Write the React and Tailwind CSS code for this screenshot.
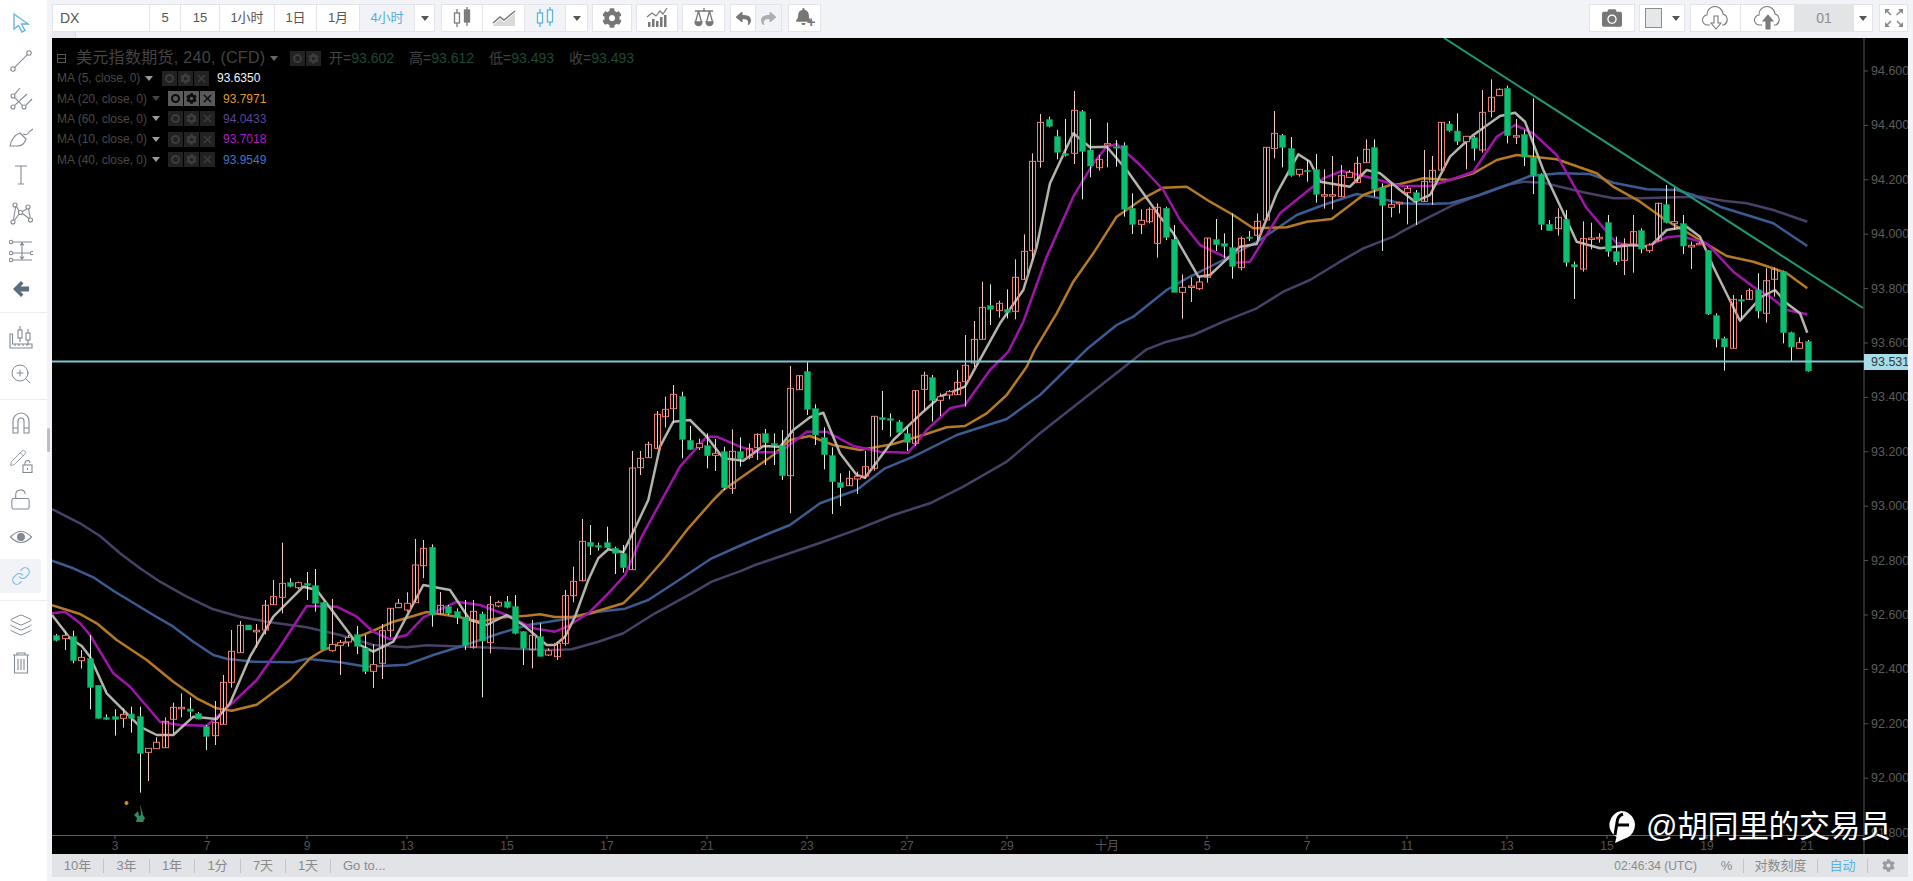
import { Link, Layers, LockOpen, Pencil, X, ZoomIn } from "lucide-react";
import { FaBell, FaCamera, FaCog, FaReply, FaShare } from "react-icons/fa";

// candle readings: [green, high, bodyTop, bodyBottom, low], y in 3x crop coords
const candleGroups = [
  [500, [
    [1,402,407,421,424],[0,392,406,416,450],[1,392,410,482,490],[0,450,472,482,506],[1,405,476,562,628],[1,556,556,655,656],
    [1,643,653,658,660],[1,628,650,658,707],[0,625,643,655,683],[1,620,642,655,698],[1,620,650,760,878],[0,745,745,757,843],
    [0,712,727,746,746],[0,652,664,743,743],[0,608,622,658,700],[0,580,622,626,652],[1,592,627,634,652],[1,636,641,657,658],
    [1,675,680,709,750],[0,603,668,707,735],[0,525,547,673,673],[0,390,454,547,563],[0,363,376,458,458],[1,375,375,390,390],
    [0,372,391,395,443],[0,300,316,390,403],[0,240,290,314,314],[0,128,250,292,340],[1,235,248,259,262],[0,245,248,263,268],
    [1,216,250,256,300],[1,207,257,310,335],[1,305,308,449,450],[0,297,433,452,455],[0,420,428,436,525],[0,405,412,426,440],
    [1,378,404,439,462],[1,405,445,514,522],[0,432,494,514,564],[0,372,392,490,537],[0,325,325,391,412],[0,297,310,323,323],
    [0,277,310,330,335],[0,117,195,308,308],[0,120,145,197,234],[1,133,142,345,380],[0,276,316,342,344],[1,315,320,340,345],
    [1,325,335,352,372],[1,300,353,436,450],[0,300,334,442,446],[1,335,342,423,592],[0,288,314,428,460],[0,302,307,318,322],
    [1,288,305,322,325],[1,285,320,400,403],[1,393,395,445,495],[0,360,406,449,505],[1,370,410,469,470],[0,445,452,465,468],
    [0,425,430,470,480],
    [0,270,287,430,437],[0,200,244,287,307],[0,57,124,242,244],[1,75,127,139,165],[1,128,137,139,152],[1,80,128,143,146],
    [1,140,145,160,222],[1,135,160,203,218],[0,-147,-96,209,209],
  ]],
  [340, [
    [0,333,355,383,405],[0,305,313,353,353],[0,213,223,325,328],[0,170,208,230,262],[0,135,163,206,250],[1,155,170,298,355],
    [1,258,301,328,330],[0,296,311,323,330],[1,280,317,347,385],[0,297,340,346,393],[1,320,335,443,450],[0,268,334,445,462],
    [1,292,335,356,380],[0,310,326,352,358],[0,280,283,323,360],[1,267,281,308,375],[1,280,311,314,375],[1,270,318,407,420],
    [0,78,145,407,520],[0,105,107,149,150],[1,65,95,208,225],[1,193,206,285,315],[1,262,293,344,388],[1,322,347,425,522],
    [1,400,428,443,498],[0,392,415,437,437],[0,395,409,417,462],[0,333,380,408,415],[0,229,229,385,392],[1,153,233,239,270],
    [1,220,236,241,290],[1,240,246,277,280],[1,260,281,307,333],[0,152,152,310,318],[0,95,106,148,210],[1,105,113,181,245],
    [0,160,170,181,228],[0,150,155,165,178],[0,90,127,164,165],[0,-15,76,125,200],
  ]],
  [90, [
    [0,693,748,819,831],[0,575,652,748,748],[1,583,647,658,705],[0,632,640,662,683],[1,598,658,667,685],[0,508,562,664,688],
    [0,433,484,568,570],[0,190,214,482,510],[0,72,97,214,233],[1,80,89,109,112],[1,120,140,187,208],[1,87,191,196,200],
    [0,3,61,190,222],[1,60,65,184,328],[1,87,180,228,262],[0,195,208,233,242],[0,98,161,165,232],[1,150,170,172,230],
    [1,157,167,358,380],[1,310,355,403,432],[0,358,391,403,432],[0,352,358,395,400],[0,340,352,460,503],[1,350,355,442,450],
    [1,405,449,607,607],[0,553,592,607,686],[0,562,588,592,636],[0,560,576,596,600],[0,444,444,562,578],[1,387,449,464,483],
    [1,430,461,469,505],[1,370,473,529,566],[0,440,445,533,541],[1,423,441,443,453],[0,370,394,436,450],[0,172,172,390,392],
    [0,63,130,175,205],[1,132,136,172,232],[1,141,176,256,260],[0,238,238,253,260],[1,210,241,243,275],[1,192,239,313,338],
    [0,238,314,316,356],[0,198,314,316,358],[0,225,257,320,320],[0,240,247,262,263],[0,200,220,278,278],[0,148,178,218,218],
    [1,148,173,298,320],[1,280,293,346,483],[0,280,343,352,382],[0,335,337,341,370],
  ]],
  [40, [
    [0,438,445,458,553],[1,450,458,482,555],[0,330,424,484,486],[0,348,391,426,495],[0,247,247,390,392],[1,243,252,272,275],
    [1,220,273,304,315],[0,289,289,305,388],[1,288,293,325,362],[0,150,217,330,338],[0,118,172,214,232],[0,145,148,167,168],
    [1,137,145,287,310],[0,237,287,290,312],[1,270,284,351,378],[1,175,352,407,462],[1,400,404,553,570],[1,540,553,572,572],
    [0,505,532,566,587],[1,510,538,667,680],[1,665,674,681,777],[0,544,596,687,695],[0,548,594,596,628],[0,580,592,595,608],
    [1,525,548,634,650],[1,590,635,665,675],[0,595,613,661,705],[0,525,575,612,698],[1,565,572,627,640],[0,610,615,632,638],
    [0,488,490,602,605],[1,435,494,547,550],[0,440,545,551,570],[1,525,551,618,642],[0,605,616,621,687],[0,605,610,613,615],
    [1,630,632,822,825],[1,820,827,897,922],[1,890,896,921,992],[0,765,778,925,925],[1,765,779,781,838],[0,745,752,778,780],
    [1,700,750,813,835],[0,685,722,820,848],[0,682,688,718,770],[1,692,695,878,910],[1,875,878,921,965],[0,892,908,925,925],
    [1,900,905,993,995],
  ]],
];

const candles = candleGroups.flatMap(([y0, rows]) =>
  rows.map(([g, h, t, b, l]) => ({ g, h: y0 + h / 3, t: y0 + t / 3, b: y0 + b / 3, l: y0 + l / 3 }))
);

const crop = (x0, y0, pts) => pts.map(([x, y]) => `${(x0 + x / 3).toFixed(1)},${(y0 + y / 3).toFixed(1)}`).join(" ");

// moving averages traced from the crops, same crop coords
const maDark = [
  crop(40,500,[[36,27],[120,70],[180,108],[240,160],[300,205],[360,245],[440,290],[520,328],[600,350],[680,365],[800,382],[900,405],[1000,435],[1100,442],[1160,436],[1300,441],[1440,447]]),
  crop(555,500,[[0,450],[50,448],[130,425],[205,400],[300,340],[410,280],[470,245],[560,212],[600,195],[660,175]]),
  crop(560,340,[[790,605],[900,565],[1000,525],[1110,490],[1210,440],[1340,365],[1440,280]]),
  crop(960,90,[[560,778],[620,755],[700,735],[790,695],[890,655],[970,605],[1050,570],[1140,515],[1210,475],[1300,440]]),
  crop(1400,40,[[0,578],[80,535],[160,495],[250,460],[320,435],[370,425],[430,428],[480,440],[550,457],[640,475],[720,475],[830,472],[900,470],[970,482],[1040,490],[1120,510],[1222,545]]),
].join(" ");
const maBlue = [
  crop(40,500,[[36,182],[100,205],[160,232],[220,272],[340,345],[400,380],[460,425],[520,465],[560,476],[640,485],[760,487],[800,476],[900,487],[980,500],[1100,494],[1180,465],[1260,440],[1380,400],[1460,376]]),
  crop(555,500,[[0,362],[50,354],[130,335],[210,326],[280,300],[380,235],[470,175],[560,135],[660,93]]),
  crop(560,340,[[690,555],[780,490],[890,450],[975,385],[1060,350],[1190,285],[1340,237],[1440,165]]),
  crop(960,90,[[380,778],[470,705],[520,680],[620,600],[680,565],[790,510],[900,450],[1010,375],[1090,345],[1190,312],[1260,325]]),
  crop(1400,40,[[0,490],[80,492],[150,490],[240,465],[330,432],[390,408],[480,400],[570,402],[640,428],[740,448],[830,450],[880,465],[960,500],[1040,525],[1120,550],[1222,618]]),
].join(" ");
const maOrange = [
  crop(40,500,[[36,316],[120,342],[170,370],[230,420],[320,480],[400,545],[470,595],[530,625],[575,632],[650,614],[750,540],[810,475],[850,450],[920,425],[1000,392],[1060,365],[1120,348],[1160,336],[1260,352],[1320,365],[1390,352],[1460,347],[1500,343]]),
  crop(555,500,[[0,351],[50,351],[110,338],[205,310],[260,255],[330,175],[400,85],[475,0]]),
  crop(560,340,[[490,450],[640,345],[690,300],[750,288],[820,315],[900,330],[1000,312],[1090,285],[1160,262],[1215,258],[1280,220],[1340,165],[1400,80]]),
  crop(960,90,[[225,778],[290,670],[340,575],[400,490],[470,380],[550,325],[610,293],[680,290],[750,335],[820,375],[880,415],[980,412],[1040,395],[1115,387],[1210,315],[1290,285]]),
  crop(1400,40,[[0,432],[70,415],[150,420],[220,400],[290,360],[350,345],[470,358],[590,400],[640,440],[720,485],[800,542],[900,600],[980,648],[1060,665],[1110,682],[1160,700],[1222,745]]),
].join(" ");
const maPurple = [
  crop(40,500,[[36,340],[75,335],[120,370],[150,405],[220,520],[270,560],[360,665],[420,675],[500,677],[560,625],[650,540],[720,440],[800,318],[890,320],[950,350],[1000,395],[1050,418],[1100,405],[1150,352],[1250,305],[1320,315],[1400,345],[1480,385]]),
  crop(555,500,[[0,395],[40,378],[100,340],[160,280],[210,225],[260,110],[320,0]]),
  crop(560,340,[[360,380],[440,290],[470,290],[540,320],[600,337],[660,337],[740,275],[800,275],[880,318],[960,335],[1045,338],[1100,270],[1170,205],[1215,195],[1290,90],[1345,35]]),
  crop(960,90,[[190,695],[260,500],[340,320],[400,220],[440,170],[470,162],[540,225],[610,300],[660,390],[720,465],[830,518],[870,515],[960,370],[1090,265],[1145,243],[1220,260]]),
  crop(1400,40,[[0,437],[90,438],[150,420],[220,395],[290,290],[345,255],[400,280],[470,345],[560,505],[650,610],[740,620],[800,592],[840,588],[920,610],[1000,695],[1060,740],[1110,770],[1160,810],[1222,823]]),
].join(" ");
const maGray = [
  crop(40,500,[[36,345],[90,415],[125,438],[150,470],[200,580],[300,680],[350,705],[400,705],[460,650],[530,657],[570,610],[630,470],[700,350],[790,260],[830,270],[950,430],[1000,455],[1060,425],[1150,255],[1230,270],[1290,360],[1340,375],[1400,345],[1450,375],[1520,435]]),
  crop(555,500,[[0,435],[30,410],[60,350],[100,240],[130,175],[160,148],[205,157],[240,85],[280,0]]),
  crop(560,340,[[300,320],[340,245],[390,240],[440,290],[490,355],[550,362],[610,318],[660,320],[700,270],[750,232],[790,218],[840,340],[890,405],[915,413],[1000,300],[1090,215],[1140,170],[1215,140]]),
  crop(960,90,[[120,700],[190,600],[230,470],[270,280],[340,130],[390,172],[440,170],[500,240],[600,380],[640,430],[715,560],[750,555],[840,470],[890,462],[950,310],[1015,193],[1050,215],[1080,275],[1170,290],[1220,240],[1260,250]]),
  crop(1400,40,[[0,450],[45,485],[90,465],[150,350],[220,285],[300,228],[345,218],[375,245],[430,390],[500,540],[530,605],[600,625],[700,615],[750,620],[800,570],[860,560],[900,590],[940,680],[1020,842],[1085,770],[1125,750],[1160,790],[1200,820],[1222,878]]),
].join(" ");

const priceLabels = ["94.600","94.400","94.200","94.000","93.800","93.600","93.400","93.200","93.000","92.800","92.600","92.400","92.200","92.000","91.800"];
const timeLabels = ["3","7","9","13","15","17","21","23","27","29","十月","5","7","11","13","15","19","21"];
const timeX = (i) => (i === 0 ? 115 : 107 + i * 100);

const maRows = [
  { name: "MA (5, close, 0)", value: "93.6350", color: "text-[#f4f4f4]", nameW: "w-[105px]", on: false },
  { name: "MA (20, close, 0)", value: "93.7971", color: "text-[#e09a2c]", nameW: "w-[111px]", on: true },
  { name: "MA (60, close, 0)", value: "94.0433", color: "text-[#5d4596]", nameW: "w-[111px]", on: false },
  { name: "MA (10, close, 0)", value: "93.7018", color: "text-[#b01cc4]", nameW: "w-[111px]", on: false },
  { name: "MA (40, close, 0)", value: "93.9549", color: "text-[#3f74c4]", nameW: "w-[111px]", on: false },
];

const Caret = ({ className = "border-t-[#555]" }) => (
  <span className={`inline-block w-0 h-0 border-l-[4px] border-r-[4px] border-t-[5px] border-l-transparent border-r-transparent ${className}`}></span>
);

const Cell = ({ w, className = "", children }) => (
  <div className={`${w} h-[28px] flex items-center justify-center border border-[#e3e5ea] -ml-px first:ml-0 ${className}`}>
    {children}
  </div>
);

const CandleIcon = ({ color = "#7b7b7b" }) => (
  <svg width="26" height="24" viewBox="0 0 26 24" fill="none" stroke={color} strokeWidth="1.3">
    <path d="M8 3v18M18 1v19" />
    <rect x="5.5" y="7" width="5" height="10" fill="#fff" />
    <rect x="15.5" y="4" width="5" height="12" fill={color === "#7b7b7b" ? color : "#fff"} />
  </svg>
);

const AreaIcon = () => (
  <svg width="26" height="20" viewBox="0 0 26 20">
    <path d="M2 17L9 11L13 14L24 5V18H2Z" fill="#d9d9d9" />
    <path d="M2 15L9 9L13 12L24 3" fill="none" stroke="#777" strokeWidth="1.4" />
  </svg>
);

const IndicatorIcon = () => (
  <svg width="22" height="22" viewBox="0 0 22 22" fill="#777">
    <rect x="2" y="15" width="2.5" height="5" />
    <rect x="6" y="12" width="2.5" height="8" />
    <rect x="10" y="14" width="2.5" height="6" />
    <rect x="14" y="10" width="2.5" height="10" />
    <rect x="18" y="8" width="2.5" height="12" />
    <path d="M1 10L6 6L10 9L14 4L17 7L21 1" fill="none" stroke="#777" strokeWidth="1.2" />
  </svg>
);

const ScaleIcon = () => (
  <svg width="22" height="22" viewBox="0 0 22 22" fill="none" stroke="#777" strokeWidth="1.3">
    <path d="M2 4H20M11 1V5M5.5 4L2.5 15M5.5 4L8.5 15M16.5 4L13.5 15M16.5 4L19.5 15" />
    <path d="M2 15a3.5 3.5 0 0 0 7 0ZM13 15a3.5 3.5 0 0 0 7 0Z" fill="#777" />
  </svg>
);

const CloudDownIcon = () => (
  <svg width="30" height="24" viewBox="0 0 30 24" fill="none" stroke="#7b7b7b" strokeWidth="1.1">
    <path d="M9 19H7a5 5 0 0 1-1-10 8 8 0 0 1 16-1 6 6 0 0 1 1 11h-2" />
    <path d="M13 10h4v7h3l-5 6-5-6h3z" fill="#fff" />
  </svg>
);

const CloudUpIcon = () => (
  <svg width="30" height="24" viewBox="0 0 30 24" fill="none" stroke="#7b7b7b" strokeWidth="1.1">
    <path d="M9 19H7a5 5 0 0 1-1-10 8 8 0 0 1 16-1 6 6 0 0 1 1 11h-2" />
    <path d="M13 23v-8h-3l5-6 5 6h-3v8z" fill="#7b7b7b" />
  </svg>
);

const ExpandIcon = () => (
  <svg width="20" height="20" viewBox="0 0 20 20" fill="none" stroke="#8a8a8a" strokeWidth="1.6">
    <path d="M2 2L7 7M12.5 7L18 2M2 18L7 13M13 13L18 18" />
    <path d="M1 1h5L1 6ZM19 1h-5l5 5ZM1 19h5l-5-5ZM19 19h-5l5-5Z" fill="#8a8a8a" stroke="none" />
  </svg>
);

// left tool column drawings, all on a 24 box
const toolStroke = { width: 24, height: 24, viewBox: "0 0 24 24", fill: "none", stroke: "#838a94", strokeWidth: 1.1 };

const CursorTool = () => (
  <svg {...toolStroke} stroke="#62b7e6" strokeWidth="1.4">
    <path d="M5 3V18L9.5 14.5L13 21L16 19.5L12.5 13H19Z" />
  </svg>
);
const LineTool = () => (
  <svg {...toolStroke}>
    <circle cx="4" cy="20" r="2.2" />
    <circle cx="20" cy="4" r="2.2" />
    <path d="M5.6 18.4L18.4 5.6" />
  </svg>
);
const ForkTool = () => (
  <svg {...toolStroke}>
    <circle cx="4" cy="9" r="2" />
    <circle cx="4" cy="20" r="2" />
    <circle cx="15" cy="20" r="2" />
    <path d="M5.4 7.6L11 1M5.4 18.6L18 7M16.5 18.6L23 12M5.4 10.4L13.6 18.6" />
  </svg>
);
const BrushTool = () => (
  <svg {...toolStroke}>
    <path d="M1 21Q3 11 11 8L17 14Q15 21 8 21Z" />
    <path d="M14 9Q18 11 20 7L24 4" />
  </svg>
);
const TextTool = () => (
  <svg {...toolStroke}>
    <path d="M6 3H18M12 3V21M9 21H15" />
  </svg>
);
const NetTool = () => (
  <svg {...toolStroke}>
    <circle cx="6" cy="4" r="2" />
    <circle cx="19" cy="6" r="2" />
    <circle cx="4" cy="21" r="2" />
    <circle cx="21.5" cy="19" r="2" />
    <circle cx="11.5" cy="11.5" r="2" />
    <path d="M6.6 6L4.4 19M18 8L13 10.5M10 10L7.5 5.5M10 13L5.4 19.5M13.5 12.5L20 17.5M19.6 8L21.2 17" />
  </svg>
);
const FibTool = () => (
  <svg {...toolStroke}>
    <circle cx="2" cy="3" r="1.7" />
    <circle cx="2" cy="14" r="1.7" />
    <circle cx="2" cy="21" r="1.7" />
    <circle cx="23" cy="14" r="1.7" />
    <path d="M4 3H23M4 14H21M4 21H23M13 4V20M11 6.5L13 4L15 6.5M11 17.5L13 20L15 17.5" />
  </svg>
);
const BackTool = () => (
  <svg width="18" height="18" viewBox="0 0 18 18" fill="#5e6d7e">
    <path d="M9 1L1 9L9 17L11.5 14.5L8.5 11.5H17V6.5H8.5L11.5 3.5Z" />
  </svg>
);
const RulerTool = () => (
  <svg {...toolStroke}>
    <path d="M1 9H3.5V19H23V23H1ZM6 19V21M10 19V21M14 19V21M18 19V21" />
    <path d="M11 1V17M19 4V20" />
    <rect x="9" y="5" width="4" height="8" fill="#fff" />
    <rect x="17" y="8" width="4" height="7" fill="#fff" />
  </svg>
);
const MagnetTool = () => (
  <svg {...toolStroke}>
    <path d="M4 22V10a8 8 0 0 1 16 0V22H15V10a3 3 0 0 0-6 0V22ZM4 17H9M15 17H20" />
  </svg>
);
const PenLockTool = () => (
  <span className="relative block w-[24px] h-[24px]">
    <Pencil size={18} strokeWidth={1.1} color="#838a94" />
    <svg width="11" height="13" viewBox="0 0 11 13" fill="none" stroke="#838a94" strokeWidth="1.1" className="absolute right-0 bottom-0 bg-white">
      <rect x="1" y="5" width="9" height="7.5" />
      <path d="M3 5V3a2.5 2.5 0 0 1 5 0M5.5 8v2" />
    </svg>
  </span>
);
const EyeTool = () => (
  <svg {...toolStroke}>
    <path d="M1.5 12Q12 1 22.5 12Q12 23 1.5 12Z" />
    <circle cx="12" cy="12" r="3.4" fill="#838a94" />
  </svg>
);
const TrashTool = () => (
  <svg {...toolStroke}>
    <path d="M4 4H20M8 4V2H16V4M5.5 4V22H18.5V4M9 8V19M12 8V19M15 8V19" />
  </svg>
);

const ToolRow = ({ children, h = "h-[38px]", className = "" }) => (
  <div className={`${h} flex items-center justify-center w-[41px] ${className}`}>{children}</div>
);

const Sep = ({ className }) => <div className={`h-px bg-[#eaecef] ${className}`}></div>;

const Sidebar = () => (
  <aside className="w-[47px] shrink-0 bg-white pt-[4px]">
    <ToolRow><CursorTool /></ToolRow>
    <ToolRow><LineTool /></ToolRow>
    <ToolRow><ForkTool /></ToolRow>
    <ToolRow><BrushTool /></ToolRow>
    <ToolRow><TextTool /></ToolRow>
    <ToolRow><NetTool /></ToolRow>
    <ToolRow><FibTool /></ToolRow>
    <ToolRow><BackTool /></ToolRow>
    <Sep className="mt-[4px] mb-[5px]" />
    <ToolRow h="h-[37px]"><RulerTool /></ToolRow>
    <ToolRow h="h-[37px]"><ZoomIn size={24} strokeWidth={1} color="#838a94" /></ToolRow>
    <Sep className="mt-[7px] mb-[4px]" />
    <ToolRow><MagnetTool /></ToolRow>
    <ToolRow><PenLockTool /></ToolRow>
    <ToolRow><LockOpen size={23} strokeWidth={1.1} color="#838a94" /></ToolRow>
    <ToolRow><EyeTool /></ToolRow>
    <ToolRow h="h-[34px]" className="mt-[3px] bg-[#f1f3f6] rounded-r-[3px]"><Link size={20} strokeWidth={1.3} color="#6cb9e3" /></ToolRow>
    <Sep className="mt-[7px] mb-[5px]" />
    <ToolRow><Layers size={24} strokeWidth={1} color="#838a94" /></ToolRow>
    <ToolRow><TrashTool /></ToolRow>
  </aside>
);

const Toolbar = () => (
  <div className="h-[38px] shrink-0 pt-[4px] flex items-start text-[13px] text-[#555] bg-[#f1f3f6]">
    <div className="flex bg-white">
      <Cell w="w-[98px]" className="justify-start pl-[7px] text-[14px]">DX</Cell>
      <Cell w="w-[32px]">5</Cell>
      <Cell w="w-[40px]">15</Cell>
      <Cell w="w-[56px]">1小时</Cell>
      <Cell w="w-[43px]">1日</Cell>
      <Cell w="w-[44px]">1月</Cell>
      <Cell w="w-[56px]" className="bg-[#f1f3f6] text-[#52aee0]">4小时</Cell>
      <Cell w="w-[21px]"><Caret /></Cell>
    </div>
    <div className="flex bg-white ml-[6px]">
      <Cell w="w-[42px]"><CandleIcon /></Cell>
      <Cell w="w-[43px]"><AreaIcon /></Cell>
      <Cell w="w-[42px]" className="bg-[#f1f3f6]"><CandleIcon color="#59b5e6" /></Cell>
      <Cell w="w-[23px]"><Caret /></Cell>
    </div>
    <div className="flex bg-white ml-[4px]"><Cell w="w-[40px]"><FaCog size={20} color="#777" /></Cell></div>
    <div className="flex bg-white ml-[4px]"><Cell w="w-[42px]"><IndicatorIcon /></Cell></div>
    <div className="flex bg-white ml-[4px]"><Cell w="w-[43px]"><ScaleIcon /></Cell></div>
    <div className="flex bg-white ml-[5px]">
      <Cell w="w-[26px]"><FaReply size={15} color="#777" /></Cell>
      <Cell w="w-[27px]" className="bg-[#f1f3f6]"><FaShare size={15} color="#aeaeae" /></Cell>
    </div>
    <div className="flex bg-white ml-[6px]">
      <Cell w="w-[33px]">
        <span className="relative block w-[20px] h-[20px]">
          <FaBell size={17} color="#777" />
          <span className="absolute -right-[1px] bottom-0 text-[15px] leading-[13px] font-bold text-[#777]">+</span>
        </span>
      </Cell>
    </div>
    <div className="ml-auto flex">
      <div className="flex bg-white"><Cell w="w-[46px]"><FaCamera size={20} color="#777" /></Cell></div>
      <div className="flex bg-white ml-[4px]">
        <Cell w="w-[46px]" className="gap-[10px]">
          <span className="w-[17px] h-[20px] bg-[#e6e7e8] border border-[#8c8c8c]"></span>
          <Caret />
        </Cell>
      </div>
      <div className="flex bg-white ml-[5px]">
        <Cell w="w-[51px]"><CloudDownIcon /></Cell>
        <Cell w="w-[55px]"><CloudUpIcon /></Cell>
        <Cell w="w-[60px]" className="bg-[#e3e4e6] text-[#8f8f8f] text-[14px]">01</Cell>
        <Cell w="w-[20px]"><Caret /></Cell>
      </div>
      <div className="flex bg-white ml-[6px]"><Cell w="w-[29px]"><ExpandIcon /></Cell></div>
    </div>
  </div>
);

const Chart = () => (
  <svg width="1856" height="816" viewBox="52 38 1856 816" className="block">
    <line x1="1864" y1="38" x2="1864" y2="854" stroke="#555" />
    {priceLabels.map((label, i) => (
      <g key={label}>
        <line x1="1864" x2="1868" y1={71 + i * 54.4} y2={71 + i * 54.4} stroke="#555" />
        <text x="1871" y={75 + i * 54.4} fill="#5c5c5c" fontSize="12.5">{label}</text>
      </g>
    ))}
    <line x1="52" y1="835.5" x2="1864" y2="835.5" stroke="#5e5e5e" />
    {timeLabels.map((label, i) => (
      <g key={i}>
        <line x1={timeX(i)} x2={timeX(i)} y1="835" y2="839" stroke="#5e5e5e" />
        <text x={timeX(i)} y="850" fill="#555" fontSize="12" textAnchor="middle">{label}</text>
      </g>
    ))}
    <polyline points={maDark} fill="none" stroke="#4a3f66" strokeWidth="2.5" strokeLinejoin="round" />
    <polyline points={maBlue} fill="none" stroke="#3a5c92" strokeWidth="2.5" strokeLinejoin="round" />
    <polyline points={maOrange} fill="none" stroke="#b57a22" strokeWidth="2.5" strokeLinejoin="round" />
    <polyline points={maPurple} fill="none" stroke="#a014ac" strokeWidth="2.5" strokeLinejoin="round" />
    <polyline points={maGray} fill="none" stroke="#b4b4ac" strokeWidth="2.5" strokeLinejoin="round" />
    {candles.map((c, i) => {
      const x = Math.round(56.33 + i * 8.34);
      return (
        <g key={i}>
          <line x1={x + 0.5} x2={x + 0.5} y1={c.h} y2={c.l} stroke={c.g ? "#d9eede" : "#f2c9c5"} />
          {c.g ? (
            <rect x={x - 2.5} y={c.t} width="6" height={Math.max(c.b - c.t, 1.5)} fill="#0cc071" stroke="#1b9a62" strokeWidth="0.5" />
          ) : (
            <rect x={x - 2.5} y={c.t} width="6" height={Math.max(c.b - c.t, 1.5)} fill={c.b - c.t < 7 ? "#000" : "none"} stroke="#ea7a72" />
          )}
        </g>
      );
    })}
    <line x1="52" y1="361.5" x2="1864" y2="361.5" stroke="#7cc5d2" strokeWidth="2" />
    <line x1="1444" y1="38" x2="1863" y2="308" stroke="#1f9878" strokeWidth="2" />
    <circle cx="126.5" cy="803" r="2" fill="#d88a1e" />
    <path d="M140 804L142 811L143 815L145 818L143 822H136L137 818L134 815L138 811L139 816L141 815Z" fill="#2f8a62" />
    <rect x="1864" y="354" width="44" height="16" fill="#a8dde8" />
    <text x="1871" y="366" fill="#2b3a3e" fontSize="12.5">93.531</text>
  </svg>
);

const LegendButton = ({ on, children }) => (
  <span className={`w-[15px] h-[15px] flex items-center justify-center ${on ? "bg-[#5a5a5a] text-[#0c0c0c]" : "bg-[#222] text-[#3d3d3d]"}`}>
    {children}
  </span>
);

const LegendTools = ({ on }) => (
  <>
    <LegendButton on={on}><span className={`w-[9px] h-[9px] rounded-full border-2 ${on ? "border-[#0c0c0c]" : "border-[#3d3d3d]"}`}></span></LegendButton>
    <LegendButton on={on}><FaCog size={11} /></LegendButton>
    <LegendButton on={on}><X size={13} strokeWidth={2.5} /></LegendButton>
  </>
);

const Legend = () => (
  <div className="absolute left-[5px] top-[10px]">
    <div className="flex items-center h-[20px] text-[14px] text-[#444] whitespace-nowrap">
      <span className="w-[9px] h-[9px] border border-[#555] flex items-center mr-[10px]"><span className="w-full h-px bg-[#555]"></span></span>
      <span className="w-[191px] text-[16px] tracking-[0.3px]">美元指数期货, 240, (CFD)</span>
      <span className="ml-[3px] mr-[12px] flex"><Caret className="border-t-[#666]" /></span>
      <span className="flex gap-px mr-[8px]">
        <span className="w-[15px] h-[15px] bg-[#222] flex items-center justify-center"><span className="w-[9px] h-[9px] rounded-full border-2 border-[#3d3d3d]"></span></span>
        <span className="w-[15px] h-[15px] bg-[#222] flex items-center justify-center text-[#3d3d3d]"><FaCog size={11} /></span>
      </span>
      <span className="w-[80px]">开=<span className="text-[#1c4a36]">93.602</span></span>
      <span className="w-[80px]">高=<span className="text-[#1c4a36]">93.612</span></span>
      <span className="w-[80px]">低=<span className="text-[#1c4a36]">93.493</span></span>
      <span>收=<span className="text-[#1c4a36]">93.493</span></span>
    </div>
    {maRows.map((row) => (
      <div key={row.name} className="flex items-center h-[20.4px] text-[12px] whitespace-nowrap">
        <span className={`${row.nameW} flex items-center gap-[5px] text-[#484848]`}>
          {row.name}
          <Caret className={row.on ? "border-t-[#444]" : "border-t-[#9a9a9a]"} />
        </span>
        <span className="flex gap-px mr-[8px]"><LegendTools on={row.on} /></span>
        <span className={`${row.color} text-[12px]`}>{row.value}</span>
      </div>
    ))}
  </div>
);

const FootSep = () => <span className="w-px h-[14px] bg-[#c4c5c9]"></span>;

const BottomBar = () => (
  <div className="h-[23px] shrink-0 bg-[#e2e3e6] flex items-center text-[13px] text-[#8a8a8a] whitespace-nowrap">
    <span className="w-[51px] text-center">10年</span>
    <FootSep />
    <span className="w-[45px] text-center">3年</span>
    <FootSep />
    <span className="w-[44px] text-center">1年</span>
    <FootSep />
    <span className="w-[45px] text-center">1分</span>
    <FootSep />
    <span className="w-[44px] text-center">7天</span>
    <FootSep />
    <span className="w-[44px] text-center">1天</span>
    <FootSep />
    <span className="ml-[12px]">Go to...</span>
    <span className="ml-auto text-[12px]">02:46:34 (UTC)</span>
    <span className="ml-[13px]"><FootSep /></span>
    <span className="w-[33px] text-center">%</span>
    <FootSep />
    <span className="w-[73px] text-center">对数刻度</span>
    <FootSep />
    <span className="w-[49px] text-center text-[#58b4e4]">自动</span>
    <FootSep />
    <span className="w-[40px] flex justify-center"><FaCog size={13} color="#9a9a9a" /></span>
  </div>
);

const Watermark = () => (
  <div className="absolute left-[1554px] top-[769px] flex items-center gap-[10px] text-white">
    <svg width="30" height="34" viewBox="0 0 30 34">
      <path d="M15 1a14 14 0 0 1 4 27.4L9 33L10.5 27A14 14 0 0 1 15 1Z" fill="#fff" />
      <path d="M10 15H23M17 4Q11 6 11 13L9 25" fill="none" stroke="#000" strokeWidth="3" />
    </svg>
    <span className="text-[31px] leading-[40px] tracking-[-0.5px]">@胡同里的交易员</span>
  </div>
);

const App = () => {
  return (
    <div className="flex w-screen h-screen overflow-hidden bg-[#f1f3f6] font-['Liberation_Sans','Noto_Sans_CJK_SC',sans-serif]">
      <Sidebar />
      <span className="absolute left-[47px] top-[428px] w-[3px] h-[24px] rounded-full bg-[#bcbec2]"></span>
      <main className="ml-[5px] w-[1856px] h-[877px] flex flex-col">
        <Toolbar />
        <div className="relative w-[1856px] h-[816px] bg-black">
          <span className="absolute left-0 -top-[6px] w-[24px] h-[6px] bg-[#e8eaee] border-r border-[#d8dade]"></span>
          <Chart />
          <Legend />
          <Watermark />
        </div>
        <BottomBar />
      </main>
    </div>
  );
};

export default App;
